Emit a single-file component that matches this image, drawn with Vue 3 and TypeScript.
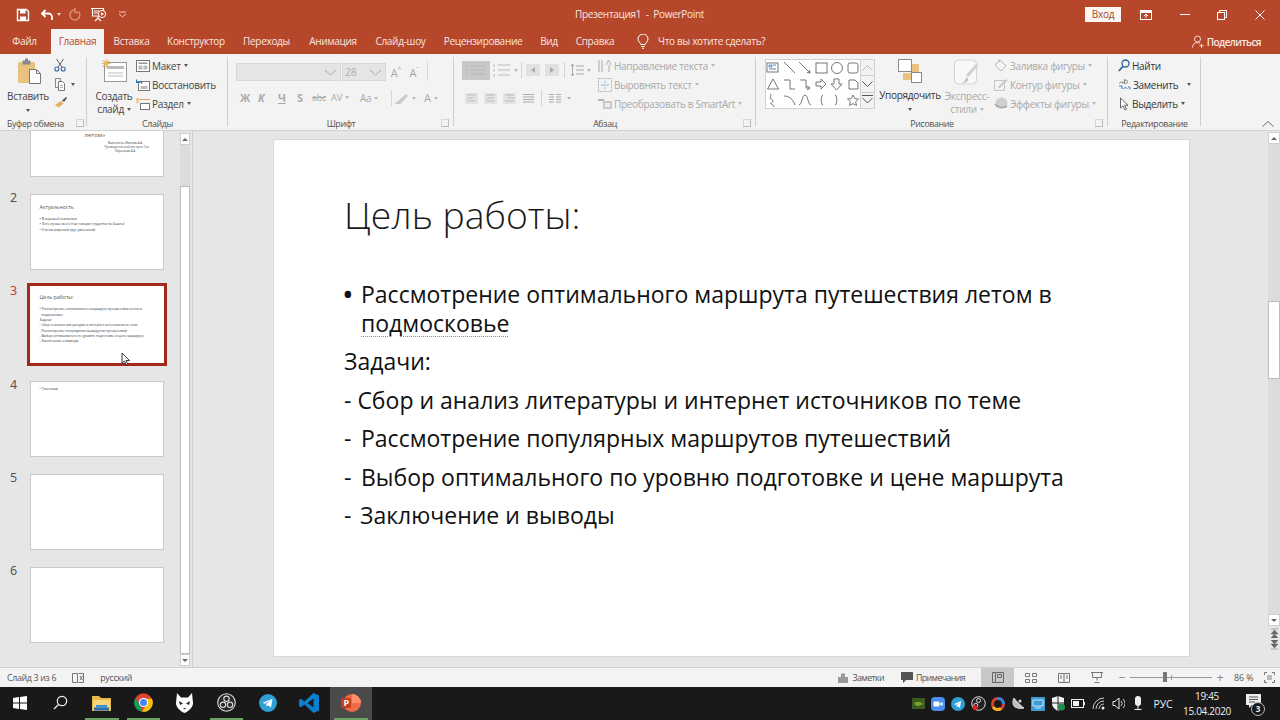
<script setup lang="ts">
const tabs = [
  { t: 'Файл', w: 49 },
  { t: 'Главная', w: 53, active: true },
  { t: 'Вставка', w: 55 },
  { t: 'Конструктор', w: 74 },
  { t: 'Переходы', w: 67 },
  { t: 'Анимация', w: 66 },
  { t: 'Слайд-шоу', w: 69 },
  { t: 'Рецензирование', w: 96 },
  { t: 'Вид', w: 36 },
  { t: 'Справка', w: 56 },
]
const fmt = ['Ж', 'К', 'Ч', 'S']
const thumbsEmpty = [5, 6]
</script>

<template>
  <div class="app">
    <header class="titlebar">
      <div class="qat">
        <svg class="qi" width="14" height="14" viewBox="0 0 14 14"><path d="M1.500 1.500h9l2 2v9h-11z" fill="none" stroke="#fff" stroke-width="1.400"/><rect x="4" y="1.500" width="5.500" height="4" fill="#fff"/><rect x="4" y="8.500" width="6" height="4" fill="#fff"/></svg>
        <svg class="qi u" width="14" height="14" viewBox="0 0 14 14"><path d="M5.500 2 2 5.500 5.500 9M2 5.500h6.500a3.500 3.500 0 0 1 3.500 3.500v3" fill="none" stroke="#fff" stroke-width="1.800"/></svg>
        <i class="mini-caret light"></i>
        <svg class="qi r" width="14" height="14" viewBox="0 0 14 14"><path d="M10.500 3.500a5 5 0 1 1-4-1.500M7 0v4.500h3" fill="none" stroke="#d98e78" stroke-width="1.500"/></svg>
        <svg class="qi s" width="18" height="16" viewBox="0 0 18 16"><path d="M1 1.500h13M2.500 1.500v7.500h11V1.500M8 9v2M5 14l3-3 3 3" fill="none" stroke="#fff" stroke-width="1.200"/><circle cx="12" cy="7" r="3.600" fill="#b7472a" stroke="#fff"/><path d="M11 5.200 14 7l-3 1.800z" fill="#fff"/><path d="M4 4h5M4 6h4" stroke="#fff"/></svg>
        <svg class="qi c" width="9" height="7" viewBox="0 0 9 7"><path d="M1 1h7M1 3l3.500 3L8 3" fill="none" stroke="#edc9bd"/></svg>
      </div>
      <div class="doc-title">Презентация1&nbsp; -&nbsp; PowerPoint</div>
      <div class="win">
        <button class="signin">Вход</button>
        <svg class="w1" width="12" height="10" viewBox="0 0 12 10"><rect x=".5" y=".5" width="11" height="9" fill="none" stroke="#fff"/><rect x=".5" y=".5" width="11" height="2.500" fill="#fff"/><path d="M6 8V4M4 6l2-2 2 2" fill="none" stroke="#fff"/></svg>
        <span class="w2"></span>
        <svg class="w3" width="10" height="10" viewBox="0 0 10 10"><path d="M2.500 2.500V.5h7v7h-2" fill="none" stroke="#fff"/><rect x=".5" y="2.500" width="7" height="7" fill="none" stroke="#fff"/></svg>
        <svg class="w4" width="10" height="10" viewBox="0 0 10 10"><path d="M.5.5l9 9M9.500.5l-9 9" stroke="#fff" fill="none"/></svg>
      </div>
    </header>

    <nav class="tabs">
      <div v-for="tab in tabs" :key="tab.t" class="tab" :class="{ active: tab.active }" :style="{ width: tab.w + 'px' }">{{ tab.t }}</div>
      <svg class="bulb" width="12" height="15" viewBox="0 0 12 15"><path d="M3.800 10.500C3.500 8.500 1 7.800 1 5a5 5 0 0 1 10 0c0 2.800-2.500 3.500-2.800 5.500zM4.200 12.500h3.600M5 14.300h2" fill="none" stroke="#fff"/></svg>
      <div class="tell">Что вы хотите сделать?</div>
      <div class="share">
        <svg width="12" height="13" viewBox="0 0 12 13"><circle cx="5.500" cy="4" r="3" fill="none" stroke="#edd"/><path d="M.5 12.500c0-3 2-4.800 5-4.800 1 0 2 .2 2.600.6M7.500 10.800h4M9.500 8.800v4" fill="none" stroke="#edd"/></svg>
        <span>Поделиться</span>
      </div>
    </nav>

    <section class="ribbon">
      <!-- Буфер обмена -->
      <div class="group g-clip">
        <div class="g-body">
          <div class="big paste">
            <svg width="26" height="28" viewBox="0 0 26 28"><rect x="1" y="4" width="17" height="21" rx="1" fill="#e8c27e"/><rect x="5.500" y="2.500" width="8" height="4" fill="#8a8a8a"/><rect x="8" y=".5" width="3" height="3" fill="#8a8a8a"/><path d="M12.500 11.500h7l4 4v10h-11z" fill="#fff" stroke="#777"/><path d="M19.500 11.500v4h4" fill="none" stroke="#777"/></svg>
            <span class="big-t">Вставить</span>
            <i class="mini-caret"></i>
          </div>
          <div class="clip-col">
            <svg width="12" height="14" viewBox="0 0 12 14"><circle cx="2.800" cy="11" r="2" fill="none" stroke="#3e6a9e" stroke-width="1.100"/><circle cx="9.200" cy="11" r="2" fill="none" stroke="#3e6a9e" stroke-width="1.100"/><path d="M2.500 1l5.600 8.500M9.500 1 3.900 9.500" stroke="#666" fill="none"/></svg>
            <div class="clip-row">
              <svg width="12" height="14" viewBox="0 0 12 14"><path d="M1.500 1.500h5v9h-5z" fill="#f3f3f3" stroke="#888"/><path d="M4.500 4.500h4l2 2v7h-6z" fill="#fff" stroke="#777"/><path d="M6 8.500h3M6 10.500h3" stroke="#aaa"/></svg>
              <i class="mini-caret"></i>
            </div>
            <svg width="14" height="12" viewBox="0 0 14 12"><path d="M1 9 7 5l2.500 2.500L4.500 11.500z" fill="#e0b060"/><path d="M8 4.500 12 1l1 1-3 4z" fill="#555"/></svg>
          </div>
        </div>
        <div class="g-label">Буфер обмена<i class="launcher"></i></div>
      </div>

      <!-- Слайды -->
      <div class="group g-slides">
        <div class="g-body">
          <div class="big create">
            <svg width="26" height="24" viewBox="0 0 26 24"><rect x="3.500" y="3.500" width="22" height="19" fill="#fff" stroke="#999"/><rect x="6" y="7" width="17" height="3" fill="#bbb"/><path d="M7 14h15M7 17h15" stroke="#bbb"/><path d="M5 0v9M.5 4.500h9M1.800 1.300l6.400 6.400M8.200 1.300 1.800 7.700" stroke="#e8b860" stroke-width="1.200"/></svg>
            <span class="big-t c1">Создать</span>
            <span class="big-t">слайд<i class="mini-caret inline"></i></span>
          </div>
          <div class="rows s-col">
            <div class="row">
              <svg width="14" height="12" viewBox="0 0 14 12"><rect x=".5" y=".5" width="13" height="11" fill="#fff" stroke="#777"/><rect x="2.500" y="2.500" width="9" height="1.500" fill="#999"/><rect x="2.500" y="5.500" width="4" height="4" fill="#bbb"/><rect x="7.500" y="5.500" width="4" height="4" fill="#bbb"/></svg>
              <span>Макет</span><i class="mini-caret inline"></i>
            </div>
            <div class="row">
              <svg width="14" height="12" viewBox="0 0 14 12"><rect x="2.500" y="2.500" width="11" height="9" fill="#fff" stroke="#777"/><rect x="4.500" y="7" width="7" height="3" fill="#bbb"/><path d="M6 4.500A3 3 0 0 0 1.500 3M.5.500v3h3" fill="none" stroke="#2a6ab0" stroke-width="1.200"/></svg>
              <span>Восстановить</span>
            </div>
            <div class="row">
              <svg width="14" height="12" viewBox="0 0 14 12"><rect x="4.500" y="5.500" width="9" height="6" fill="#fff" stroke="#777"/><path d="M4 1.500h10M0 1.500h3M0 4h3" stroke="#e0a060"/><rect x=".5" y=".5" width="3" height="2" fill="#e8b860"/></svg>
              <span>Раздел</span><i class="mini-caret inline"></i>
            </div>
          </div>
        </div>
        <div class="g-label">Слайды</div>
      </div>

      <!-- Шрифт -->
      <div class="group g-font">
        <div class="g-body col">
          <div class="font-row1">
            <div class="combo c-font"><svg width="13" height="7" viewBox="0 0 13 7"><path d="M1 1l5.500 5L12 1" fill="none" stroke="#aaa"/></svg></div>
            <div class="combo c-size"><span>28</span><svg width="13" height="7" viewBox="0 0 13 7"><path d="M1 1l5.500 5L12 1" fill="none" stroke="#aaa"/></svg></div>
            <span class="fa">A<sup>^</sup></span>
            <span class="fa">A<sup>ˇ</sup></span>
            <em class="f-sep"></em>
          </div>
          <div class="font-row2">
            <b v-for="f in fmt" :key="f" class="f" :class="'f-' + f">{{ f }}</b>
            <span class="f abc">abc</span>
            <span class="f av">AV<i class="mini-caret dis inline"></i></span>
            <span class="f aa">Aa<i class="mini-caret dis inline"></i></span>
            <em class="f-sep2"></em>
            <svg class="hl" width="16" height="14" viewBox="0 0 16 14"><path d="M2 12 12 3l2 2-8 8z" fill="#c9c9c9"/><path d="M1 12h6" stroke="#bbb"/></svg>
            <i class="mini-caret dis"></i>
            <span class="f a-last">A<i class="mini-caret dis inline"></i></span>
          </div>
        </div>
        <div class="g-label">Шрифт<i class="launcher"></i></div>
      </div>

      <!-- Абзац -->
      <div class="group g-para">
        <div class="g-body">
          <div class="para-left">
            <div class="p-row">
              <span class="bullets"><svg width="22" height="14" viewBox="0 0 22 14"><path d="M6 3h14M6 7h14M6 11h14M1 3h2M1 7h2M1 11h2" stroke="#b5b5b5"/></svg></span>
              <svg class="num" width="18" height="14" viewBox="0 0 18 14"><path d="M5 2h12M5 7h12M5 12h12M1 1v3M1 6v3M1 11v3" stroke="#bdbdbd"/></svg>
              <i class="mini-caret dis"></i>
              <em class="p-sep first-sep"></em>
              <svg width="14" height="12" viewBox="0 0 14 12"><rect width="14" height="12" fill="#e1e1e1"/><path d="M9 3 5 6l4 3z" fill="#aaa"/></svg>
              <svg class="ind2" width="14" height="12" viewBox="0 0 14 12"><rect width="14" height="12" fill="#e1e1e1"/><path d="M5 3l4 3-4 3z" fill="#aaa"/></svg>
              <em class="p-sep"></em>
              <svg width="14" height="14" viewBox="0 0 14 14"><path d="M2.500 1v12M1 3l1.500-2L4 3M1 11l1.500 2L4 11M6 3h8M6 7h8M6 11h8" stroke="#aaa" fill="none"/></svg>
              <i class="mini-caret dis"></i>
            </div>
            <div class="p-row r2">
              <svg width="13" height="11" viewBox="0 0 13 11"><rect width="13" height="11" fill="#e4e4e4"/><path d="M2 2h9M2 5h6M2 8h9" stroke="#bbb"/></svg>
              <svg width="13" height="11" viewBox="0 0 13 11"><rect width="13" height="11" fill="#e4e4e4"/><path d="M2 2h9M3 5h7M2 8h9" stroke="#bbb"/></svg>
              <svg width="13" height="11" viewBox="0 0 13 11"><rect width="13" height="11" fill="#e4e4e4"/><path d="M2 2h9M5 5h6M2 8h9" stroke="#bbb"/></svg>
              <svg width="13" height="11" viewBox="0 0 13 11"><path d="M1 1.500h11M1 4h11M1 6.500h11M1 9h11" stroke="#aaa"/></svg>
              <em class="p-sep"></em>
              <svg width="13" height="11" viewBox="0 0 13 11"><path d="M1 1.500h5M1 4h5M1 6.500h5M1 9h5M8 1.500h5M8 4h5M8 6.500h5M8 9h5" stroke="#aaa"/></svg>
              <i class="mini-caret dis"></i>
            </div>
          </div>
          <div class="rows dis-col p-col">
            <div class="row">
              <svg width="14" height="14" viewBox="0 0 14 14"><path d="M1 1v12M4 1v12M11 6v7" stroke="#aaa" fill="none"/><path d="M8 6l2.500-5L13 6" stroke="#9db6d2" fill="none"/></svg>
              <span>Направление текста</span><i class="mini-caret dis inline"></i>
            </div>
            <div class="row">
              <svg width="14" height="14" viewBox="0 0 14 14"><rect x=".5" y=".5" width="13" height="13" fill="none" stroke="#b5b5b5" stroke-dasharray="2 1"/><path d="M3 7h8M7 3v2M7 9v2" stroke="#9db6d2"/></svg>
              <span>Выровнять текст</span><i class="mini-caret dis inline"></i>
            </div>
            <div class="row">
              <svg width="14" height="12" viewBox="0 0 14 12"><rect x="5" y="3" width="9" height="8" fill="#c8c8c8"/><rect x="0" y="1" width="6" height="2" fill="#b5b5b5"/><rect x="7" y="5" width="5" height="4" fill="#eee"/></svg>
              <span>Преобразовать в SmartArt</span><i class="mini-caret dis inline"></i>
            </div>
          </div>
        </div>
        <div class="g-label">Абзац<i class="launcher"></i></div>
      </div>

      <!-- Рисование -->
      <div class="group g-draw">
        <div class="g-body">
          <div class="gallery">
            <svg width="97" height="48" viewBox="0 0 97 48" class="shapes">
              <g fill="none" stroke="#666" stroke-width=".9">
                <g transform="translate(-2 0)">
                  <rect x="3" y="3" width="11" height="9"/><path d="M5 5h3v2H5zM9 5h3M5 9h7" stroke="#4a7ab0"/>
                  <path d="M9 19l5.500 10H3.500z"/>
                  <path d="M6 34c3 1-2 4 1 5s2 3 0 4 3 1 3 4"/>
                </g>
                <g transform="translate(-3 0)">
                  <path d="M21 2l11 11M21 20h6v9h5M21 36c5 0 9 3 11 9"/>
                </g>
                <g transform="translate(-5 0)">
                  <path d="M38 2l11 11M49 13l-3-.5M49 13l-.5-3M39 20h6v8h4M46 26l3 2-3 2M38 45c3 0 3-10 6-10s3 10 6 10"/>
                </g>
                <g transform="translate(-5 0)">
                  <rect x="55" y="3" width="11" height="10"/>
                  <path d="M55 22h5v-3l5 5-5 5v-3h-5zM62 35c-2 0-1 4-2 5 1 1 0 5 2 5"/>
                </g>
                <g transform="translate(-6 0)">
                  <circle cx="77" cy="8" r="5.500"/>
                  <path d="M74 19h5v5h3l-5.500 6L71 24h3zM75 35c2 0 1 4 2 5-1 1 0 5-2 5"/>
                </g>
                <g transform="translate(-5 0)">
                  <rect x="87" y="3" width="10" height="10" rx="2"/>
                  <path d="M88 20h6l3 3v6H88zM92 35l1.700 3.500 3.800.5-2.800 2.600.8 3.900-3.500-1.900-3.500 1.900.8-3.900-2.800-2.600 3.800-.5z"/>
                </g>
              </g>
            </svg>
            <div class="g-scroll">
              <span><svg width="11" height="6" viewBox="0 0 11 6"><path d="M.5 5.500 5.500.5l5 5" fill="none" stroke="#bbb"/></svg></span>
              <span><svg width="11" height="6" viewBox="0 0 11 6"><path d="M.5.5l5 5 5-5" fill="none" stroke="#555"/></svg></span>
              <span class="more"><svg width="11" height="10" viewBox="0 0 11 10"><path d="M0 .5h11M.5 3l5 5 5-5" fill="none" stroke="#555"/></svg></span>
            </div>
          </div>
          <div class="big arrange">
            <svg width="24" height="26" viewBox="0 0 24 26"><rect x=".5" y=".5" width="13" height="12" fill="#fff" stroke="#8a8a8a"/><rect x="14" y="5" width="7" height="8" fill="#e8c27e"/><rect x="5" y="14" width="8" height="7" fill="#e8c27e"/><rect x="13.500" y="13.500" width="10" height="10" fill="#fff" stroke="#8a8a8a"/></svg>
            <span class="big-t">Упорядочить</span>
            <i class="mini-caret"></i>
          </div>
          <div class="big express">
            <svg width="26" height="26" viewBox="0 0 26 26"><rect x=".5" y="1" width="22" height="24" rx="4" fill="#f8f8f8" stroke="#d4d4d4"/><path d="M24 7l-10 11-2-2L22 5z" fill="#cfcfcf"/><path d="M6 24c3 0 6-2 6-6l2 2c0 3-3 4-8 4z" fill="#bbb"/></svg>
            <span class="big-t d1">Экспресс-</span>
            <span class="big-t d2">стили<i class="mini-caret dis inline"></i></span>
          </div>
          <div class="rows dis-col d-col">
            <div class="row"><svg width="14" height="13" viewBox="0 0 14 13"><path d="M6 1l6 6-5 5-6-6z" fill="#f5f5f5" stroke="#b5b5b5"/><path d="M4 0l2 3" stroke="#b5b5b5"/></svg><span>Заливка фигуры</span><i class="mini-caret dis inline"></i></div>
            <div class="row"><svg width="14" height="13" viewBox="0 0 14 13"><rect x=".5" y="2.500" width="10" height="10" fill="none" stroke="#c5c5c5"/><path d="M4 9l8-8 1.500 1.500-8 8z" fill="#c8c8c8"/></svg><span>Контур фигуры</span><i class="mini-caret dis inline"></i></div>
            <div class="row"><svg width="14" height="13" viewBox="0 0 14 13"><ellipse cx="7.500" cy="6" rx="6" ry="5.500" fill="#cfcfcf"/><path d="M1 7c2 3 7 5 12 2" fill="none" stroke="#a8a8a8" stroke-width="1.500"/></svg><span>Эффекты фигуры</span><i class="mini-caret dis inline"></i></div>
          </div>
        </div>
        <div class="g-label">Рисование<i class="launcher"></i></div>
      </div>

      <!-- Редактирование -->
      <div class="group g-edit">
        <div class="g-body">
          <div class="rows e-col">
            <div class="row"><svg width="12" height="13" viewBox="0 0 12 13"><circle cx="7.500" cy="4.500" r="3.500" fill="none" stroke="#2a5e9e" stroke-width="1.300"/><path d="M5 7.200.8 12" stroke="#2a5e9e" stroke-width="1.600"/></svg><span>Найти</span></div>
            <div class="row"><svg width="13" height="13" viewBox="0 0 13 13"><path d="M1.500 5.500c.5-2 3.500-2 3.500 0v-2M6.500 1v4.500c1.500 0 3 0 3-2s-3-1.500-3 0" fill="none" stroke="#666" stroke-width=".8"/><path d="M1 8h3v3M6 11c0-2 3-2 3 0M10 9c2-1 3 2 1 2.500" fill="none" stroke="#2a6ab0" stroke-width=".9"/></svg><span>Заменить</span><i class="mini-caret wide"></i></div>
            <div class="row"><svg width="12" height="14" viewBox="0 0 12 14"><path d="M2.500 1v10l2.500-2 2 4 1.500-.8-2-4h3.500z" fill="#fff" stroke="#666"/></svg><span>Выделить</span><i class="mini-caret inline"></i></div>
          </div>
        </div>
        <div class="g-label">Редактирование</div>
      </div>

      <div class="rib-rest">
        <svg width="12" height="6" viewBox="0 0 12 6"><path d="M.5 5.500 6 .5l5.500 5" fill="none" stroke="#666"/></svg>
      </div>
    </section>

    <main class="workspace">
      <aside class="slides-panel">
        <div class="thumbs">
          <div class="thumb-row first">
            <span class="tn"></span>
            <div class="thumb t1">
              <div class="t1-title">летом»</div>
              <div class="t1-sub">Выполнила: Иванова А.А.<br />Руководитель работы: преп. Сал<br />Образцова А.А.</div>
            </div>
          </div>
          <div class="thumb-row">
            <span class="tn">2</span>
            <div class="thumb">
              <div class="th-title">Актуальность</div>
              <div class="th-body">• В хорошей компании<br />• Лето лучше всего (так говорят студенты на башне)<br />• У меня широкий круг увлечений</div>
            </div>
          </div>
          <div class="thumb-row sel">
            <span class="tn">3</span>
            <div class="thumb">
              <div class="th-title">Цель работы:</div>
              <div class="th-body">• Рассмотрение оптимального маршрута путешествия летом в<br />&nbsp;&nbsp;подмосковье<br />Задачи:<br />- Сбор и анализ литературы и интернет источников по теме<br />- Рассмотрение популярных маршрутов путешествий<br />- Выбор оптимального по уровню подготовке и цене маршрута<br />- Заключение и выводы</div>
              <svg class="cursor" width="9" height="14" viewBox="0 0 9 14"><path d="M1 1v10l2.500-2 1.700 4 1.600-.7-1.700-3.800H8.500z" fill="#fff" stroke="#222" stroke-width=".9"/></svg>
            </div>
          </div>
          <div class="thumb-row">
            <span class="tn">4</span>
            <div class="thumb"><div class="th-body t4">• Текстовая</div></div>
          </div>
          <div v-for="n in thumbsEmpty" :key="n" class="thumb-row">
            <span class="tn">{{ n }}</span>
            <div class="thumb"></div>
          </div>
        </div>
        <div class="lscroll">
          <span class="arrow"><i class="tri up"></i></span>
          <span class="track"></span>
          <span class="lthumb"></span>
          <span class="arrow"><i class="tri down"></i></span>
        </div>
      </aside>

      <div class="stage">
        <article class="slide">
          <h1>Цель работы:</h1>
          <div class="li first-li"><span class="m">•</span><span class="x">Рассмотрение оптимального маршрута путешествия летом в<br /><span class="sq">подмосковье</span></span></div>
          <div class="p">Задачи:</div>
          <div class="p">- Сбор и анализ литературы и интернет источников по теме</div>
          <div class="li"><span class="m">-</span><span class="x">Рассмотрение популярных маршрутов путешествий</span></div>
          <div class="li"><span class="m">-</span><span class="x">Выбор оптимального по уровню подготовке и цене маршрута</span></div>
          <div class="li last-li"><span class="m">-</span><span class="x">Заключение и выводы</span></div>
        </article>
      </div>

      <div class="rscroll">
        <span class="arrow"><i class="tri up"></i></span>
        <span class="rtrack grow1"></span>
        <span class="rthumb"></span>
        <span class="rtrack grow2"></span>
        <span class="arrow"><i class="tri down"></i></span>
        <span class="nav"><svg width="9" height="10" viewBox="0 0 9 10"><path d="M1 1h7M4.500 2 8 6H1zM4.500 6 8 10H1z" fill="#666" stroke="#666" stroke-width=".5"/></svg></span>
        <span class="nav"><svg width="9" height="10" viewBox="0 0 9 10"><path d="M1 9h7M4.500 8 8 4H1zM4.500 4 8 0H1z" fill="#666" stroke="#666" stroke-width=".5"/></svg></span>
      </div>
    </main>

    <footer class="status">
      <span class="st-slide">Слайд 3 из 6</span>
      <svg class="st-ic" width="12" height="10" viewBox="0 0 12 10"><path d="M.5.500h5v9h-5zM6.500.500h5v9h-5M8 3l2.500 4M10.500 3 8 7" fill="none" stroke="#777"/></svg>
      <span class="st-lang">русский</span>
      <span class="st-spacer"></span>
      <svg class="notes" width="10" height="11" viewBox="0 0 10 11"><path d="M0 5h10v6H0zM3 1.500h4V5H3z" fill="#999"/></svg>
      <span class="st-notes">Заметки</span>
      <svg class="comm" width="12" height="11" viewBox="0 0 12 11"><path d="M0 0h12v8H5l-3 3V8H0z" fill="#555"/></svg>
      <span class="st-comm">Примечания</span>
      <span class="view active"><svg width="12" height="11" viewBox="0 0 12 11"><path d="M.5.500h11v10H.5zM3.500.500v10M5.500 2.500h4v3h-4z" fill="none" stroke="#666"/></svg></span>
      <span class="view"><svg width="12" height="10" viewBox="0 0 12 10"><path d="M.5.500h4v3h-4zM7.500.500h4v3h-4zM.5 6.500h4v3h-4zM7.500 6.500h4v3h-4z" fill="none" stroke="#777"/></svg></span>
      <span class="view"><svg width="12" height="10" viewBox="0 0 12 10"><path d="M.5.500h11v9H.5zM6 .5v9M2 3h2M2 5h2M8 3h2M8 5h2" fill="none" stroke="#777"/></svg></span>
      <span class="view"><svg width="12" height="11" viewBox="0 0 12 11"><path d="M0 .500h12M1.500.500v5h9v-5M6 5.500v3M3.500 10.500h5" fill="none" stroke="#777"/></svg></span>
      <div class="zoombar">
        <span class="zm">−</span>
        <div class="slider"><i class="tick"></i><i class="knob"></i></div>
        <span class="zm">+</span>
      </div>
      <span class="pct">86 %</span>
      <svg class="fit" width="11" height="11" viewBox="0 0 11 11"><path d="M.5 3V.5H3M8 .5h2.500V3M.5 8v2.500H3M8 10.500h2.500V8" fill="none" stroke="#777"/><rect x="3" y="3" width="5" height="5" fill="#bbb"/></svg>
    </footer>

    <div class="taskbar">
      <div class="tb start"><svg width="14" height="14" viewBox="0 0 14 14"><path d="M0 2l6-.9v5.400H0zM7 1l7-1v6.500H7zM0 7.500h6v5.400L0 12zM7 7.500h7V14l-7-1z" fill="#fff"/></svg></div>
      <div class="tb"><svg width="15" height="15" viewBox="0 0 15 15"><circle cx="9" cy="6" r="4.700" fill="none" stroke="#eee" stroke-width="1.200"/><path d="M5.500 9.500 1 14" stroke="#eee" stroke-width="1.300"/></svg></div>
      <div class="tb g"><svg width="19" height="16" viewBox="0 0 19 16"><path d="M0 1h7l2 2h10v13H0z" fill="#e8b84a"/><rect x="1" y="5" width="17" height="10" fill="#f5d67a"/><rect x="4" y="10" width="11" height="2.500" fill="#3a8fd8"/><rect x="2" y="12.500" width="15" height="3" fill="#2a6fb5"/></svg></div>
      <div class="tb g"><svg width="19" height="19" viewBox="0 0 19 19"><circle cx="9.500" cy="9.500" r="9.200" fill="#db4437"/><path d="M9.500 5.800h8.400A9.200 9.200 0 0 1 8 18.700l4.500-7z" fill="#f4c20d"/><path d="M1.500 4.800 6 12.300l2 6.400A9.200 9.200 0 0 1 1.500 4.800z" fill="#0f9d58"/><circle cx="9.500" cy="9.500" r="4.600" fill="#fff"/><circle cx="9.500" cy="9.500" r="3.500" fill="#4285f4"/></svg></div>
      <div class="tb"><svg width="17" height="20" viewBox="0 0 17 20"><path d="M1 0l4 4.500h7L16 0l1 10c0 4-4 8-8.500 10C4 18 0 14 0 10z" fill="#fff"/><path d="M3 8l4 2.500-3 1.500zM14 8l-4 2.500 3 1.500zM7 15l1.500 1.500L10 15z" fill="#222"/></svg></div>
      <div class="tb g"><svg width="19" height="19" viewBox="0 0 19 19"><circle cx="9.500" cy="9.500" r="8.800" fill="#2a2a2a" stroke="#ddd" stroke-width="1.100"/><circle cx="9.500" cy="5.800" r="2.700" fill="none" stroke="#ddd" stroke-width="1.100"/><circle cx="6" cy="11.800" r="2.700" fill="none" stroke="#ddd" stroke-width="1.100"/><circle cx="13" cy="11.800" r="2.700" fill="none" stroke="#ddd" stroke-width="1.100"/></svg></div>
      <div class="tb"><svg width="18" height="18" viewBox="0 0 18 18"><circle cx="9" cy="9" r="9" fill="#2f9fd6"/><path d="M3.500 8.800 13.500 4.700 12 13.500 9 11.300 7.600 12.600 7.300 10 12 6l-6 3.700z" fill="#fff"/></svg></div>
      <div class="tb"><svg width="20" height="20" viewBox="0 0 20 20"><path d="M14.500 0 20 2.500v15L14.500 20 5.500 11.500 2 14.200 0 13V7l2-1.200 3.500 2.700z" fill="#0b7fcf"/><path d="M14.500 5.500 8.500 10l6 4.500z" fill="#191919"/></svg></div>
      <div class="tb g on"><svg width="20" height="18" viewBox="0 0 20 18"><circle cx="11" cy="9" r="9" fill="#ed6c47"/><path d="M11 0a9 9 0 0 1 9 9h-9z" fill="#ff8f6b"/><rect x="0" y="4" width="10" height="10" rx="1" fill="#c43e1c"/><text x="2.400" y="12" class="pp">P</text></svg></div>
      <span class="tb-spacer"></span>
      <div class="tray">
        <svg width="13" height="11" viewBox="0 0 13 11"><rect width="13" height="11" fill="#3d5a22"/><path d="M2 6c2-3 6-3 9 0-3 2-6 3-9 0z" fill="#76a52c"/></svg>
        <svg width="14" height="14" viewBox="0 0 14 14"><rect width="14" height="14" rx="4" fill="#4a8cf0"/><rect x="2.500" y="4.500" width="6" height="5" rx="1" fill="#fff"/><path d="M9 6.500l2.500-1.500v4L9 7.500z" fill="#fff"/></svg>
        <svg width="14" height="14" viewBox="0 0 14 14"><circle cx="7" cy="7" r="7" fill="#2f9fd6"/><path d="M3 7l7-3-1 7-2.300-1.700-1 1-.2-2 3.200-2.500-4.200 2.300z" fill="#fff"/></svg>
        <svg width="15" height="15" viewBox="0 0 15 15"><circle cx="7.500" cy="7.500" r="6.800" fill="#222" stroke="#ddd"/><circle cx="7.500" cy="4.500" r="2" fill="none" stroke="#ddd"/><circle cx="4.800" cy="9.300" r="2" fill="none" stroke="#ddd"/><circle cx="4" cy="11.500" r="2.500" fill="#e02020"/></svg>
        <svg width="14" height="14" viewBox="0 0 14 14"><circle cx="7" cy="7" r="5.500" fill="none" stroke="#d8432f" stroke-width="3"/><path d="M7 1.500a5.500 5.500 0 0 1 5.500 5.500" fill="none" stroke="#2b84e0" stroke-width="3"/><path d="M2 10a5.500 5.500 0 0 0 8 1.500" fill="none" stroke="#f0b020" stroke-width="3"/></svg>
        <svg width="15" height="15" viewBox="0 0 15 15"><path d="M3 2c2 5 5 8 10 10M3 2c-2 4-1 8 1 9s6 2 9 1" fill="#bbb" stroke="#ddd"/><circle cx="9" cy="5" r="1.500" fill="#ddd"/></svg>
        <svg width="14" height="14" viewBox="0 0 14 14"><rect width="14" height="14" fill="#3a9bd6"/><path d="M2 3h10v6H2zM4 11h6" fill="none" stroke="#cdeaf8"/></svg>
        <svg width="14" height="15" viewBox="0 0 14 15"><path d="M1 2l6-2 6 2v5c0 4-3 6.500-6 8-3-1.500-6-4-6-8z" fill="#f2f2f2"/><path d="M7 0v15M1 7h12" stroke="#222"/><circle cx="10.500" cy="11" r="3.500" fill="#1e8c4e"/></svg>
        <svg width="14" height="9" viewBox="0 0 14 9"><rect x=".5" y=".5" width="12" height="8" fill="none" stroke="#eee"/><rect x="2" y="2" width="6" height="5" fill="#eee"/><rect x="13" y="3" width="1" height="3" fill="#eee"/></svg>
        <svg width="13" height="13" viewBox="0 0 13 13"><path d="M1 12A11 11 0 0 1 12 1M4 12a8 8 0 0 1 8-8M7 12a5 5 0 0 1 5-5" fill="none" stroke="#ccc"/><circle cx="11" cy="11" r="1.500" fill="#eee"/></svg>
        <svg width="13" height="13" viewBox="0 0 13 13"><path d="M1 4.500h2L7 1v11L3 8.500H1z" fill="none" stroke="#eee"/><path d="M9 4a3.500 3.500 0 0 1 0 5M11 2a6 6 0 0 1 0 9" fill="none" stroke="#ccc"/></svg>
        <svg width="10" height="15" viewBox="0 0 10 15"><rect x="2" y="0" width="6" height="10" rx="3" fill="#eee"/><path d="M5 10v3M1.500 13.500h7" stroke="#eee"/></svg>
      </div>
      <span class="lang">РУС</span>
      <div class="clock"><div>19:45</div><div>15.04.2020</div></div>
      <div class="notif">
        <svg width="15" height="14" viewBox="0 0 15 14"><path d="M0 0h15v11H6l-3 3v-3H0z" fill="#eee"/><path d="M3 3h9M3 5.500h9M3 8h6" stroke="#555"/></svg>
        <span class="badge">3</span>
      </div>
    </div>
  </div>
</template>

<style>
html, body { margin: 0; padding: 0; overflow: hidden; }
</style>

<style scoped>
.app { width: 1280px; height: 720px; display: flex; flex-direction: column; overflow: hidden; font-family: "Open Sans", "Noto Sans", sans-serif; font-size: 10px; letter-spacing: -.3px; color: #444; background: #e6e6e6; }

.titlebar { height: 29px; flex: none; background: #b7472a; display: flex; align-items: center; position: relative; color: #f7e6e0; }
.qat { display: flex; align-items: center; padding-left: 16px; }
.qi { flex: none; }
.qi.u { margin-left: 10px; }
.qi.r { margin-left: 7px; }
.qi.s { margin-left: 8px; }
.qi.c { margin-left: 10px; }
.doc-title { position: absolute; left: 0; right: 0; top: 7px; text-align: center; padding-right: 1px; }
.win { margin-left: auto; display: flex; align-items: center; }
.signin { width: 36px; height: 15px; margin: 0; padding: 0; border: 0; background: #fbf7f5; color: #a5452c; font: inherit; letter-spacing: inherit; line-height: 15px; }
.w1 { margin-left: 19px; }
.w2 { width: 10px; height: 1px; background: #fff; margin-left: 28px; }
.w3 { margin-left: 27px; }
.w4 { margin-left: 28px; margin-right: 15px; }

.tabs { height: 25px; flex: none; background: #b7472a; display: flex; align-items: stretch; color: #f7e6e0; }
.tab { text-align: center; line-height: 24px; flex: none; }
.tab:first-child { margin-right: 2px; }
.tab.active { background: #f3f3f3; color: #b7472a; }
.bulb { margin: 5px 0 0 14px; }
.tell { margin-left: 9px; line-height: 24px; }
.share { margin-left: auto; margin-right: 19px; display: flex; align-items: center; gap: 3px; color: #f7e6e0; font-weight: 600; letter-spacing: -.6px; }

.ribbon { height: 76px; flex: none; background: #f3f3f3; border-bottom: 1px solid #d2d2d2; display: flex; }
.group { flex: none; display: flex; flex-direction: column; position: relative; box-sizing: border-box; }
.group::after { content: ""; position: absolute; right: 0; top: 3px; bottom: 4px; width: 1px; background: #cfcfcf; }
.g-body { flex: 1; display: flex; min-height: 0; }
.g-body.col { flex-direction: column; }
.g-label { height: 14px; flex: none; text-align: center; line-height: 16px; color: #505050; font-size: 8.800px; letter-spacing: -.35px; position: relative; }
.launcher { position: absolute; right: 5px; top: 3px; width: 6px; height: 6px; border: 1px solid #bbb; border-top-color: #d5d5d5; border-left-color: #d5d5d5; }
.g-clip { width: 87px; }
.g-slides { width: 141px; }
.g-font { width: 226px; }
.g-para { width: 302px; }
.g-draw { width: 352px; }
.g-edit { width: 93px; }
.g-clip .g-label { text-align: left; padding-left: 7px; }
.g-clip .launcher { right: 3px; }

.big { display: flex; flex-direction: column; align-items: center; flex: none; }
.big-t { line-height: 13px; white-space: nowrap; }
.mini-caret { display: block; width: 0; height: 0; border-left: 2.500px solid transparent; border-right: 2.500px solid transparent; border-top: 3px solid #555; flex: none; }
.mini-caret.inline { display: inline-block; margin-left: 3px; vertical-align: 2px; }
.mini-caret.light { border-top-color: #f2d5cb; margin-left: 3px; }
.mini-caret.dis { border-top-color: #b8b8b8; }
.mini-caret.wide { margin-left: 9px; }

.paste { width: 56px; padding-top: 4px; }
.paste svg { margin-left: 4px; }
.paste .big-t { margin-top: 3px; line-height: 15px; }
.paste .mini-caret { margin-top: 5px; }
.clip-col { display: flex; flex-direction: column; align-items: flex-start; padding-top: 4px; gap: 5px; margin-left: -2px; }
.clip-row { display: flex; align-items: center; gap: 5px; }
.create { width: 54px; padding-top: 5px; }
.create .c1 { margin-top: 6px; line-height: 14px; }
.rows { display: flex; flex-direction: column; padding-top: 2px; }
.row { height: 19px; display: flex; align-items: center; white-space: nowrap; }
.row svg { margin-right: 2px; flex: none; }
.s-col { margin-left: -5px; }
.dis-col { color: #a9a9a9; }

.font-row1 { display: flex; align-items: center; padding: 9px 0 0 8px; height: 18px; position: relative; }
.combo { height: 18px; box-sizing: border-box; background: #e5e5e5; border: 1px solid #d8d8d8; display: flex; align-items: center; justify-content: flex-end; padding-right: 3px; }
.c-font { width: 105px; }
.c-size { width: 44px; justify-content: space-between; margin-left: 1px; padding-left: 2px; color: #b0b0b0; font-size: 10.500px; }
.fa { color: #a8a8a8; font-size: 11px; width: 18px; text-align: center; }
.fa:nth-child(3) { margin-left: 1px; }
.fa sup { font-size: 7px; line-height: 0; }
.f-sep { position: absolute; left: 199px; top: 7px; width: 1px; height: 20px; background: #d8d8d8; }
.f-sep2 { position: absolute; left: 163px; top: 9px; width: 1px; height: 16px; background: #d8d8d8; }
.font-row2 { display: flex; align-items: center; padding: 8px 0 0 0; height: 18px; color: #aaa; position: relative; }
.f { position: absolute; top: 10px; line-height: 14px; font-size: 11px; color: #ababab; white-space: nowrap; }
.f-Ж { left: 12px; }
.f-К { left: 30px; font-style: italic; }
.f-Ч { left: 50px; text-decoration: underline; }
.f-S { left: 69px; }
.abc { left: 84px; font-size: 9px; text-decoration: line-through; }
.av { left: 103px; font-size: 9.500px; }
.aa { left: 132px; font-size: 10px; }
.hl { position: absolute; left: 166px; top: 10px; }
.font-row2 > .mini-caret { position: absolute; left: 184px; top: 16px; }
.a-last { left: 196px; }

.para-left { width: 145px; padding: 6px 0 0 8px; flex: none; box-sizing: border-box; }
.p-row { display: flex; align-items: center; height: 20px; gap: 3px; }
.p-row > * { flex: none; }
.p-row.r2 { margin-top: 8px; padding-left: 2.500px; gap: 6px; }
.bullets { width: 28px; height: 19px; background: #c8c8c8; display: flex; align-items: center; justify-content: center; }
.p-sep { width: 1px; height: 16px; background: #d4d4d4; margin: 0 2px; }
.p-sep.first-sep { margin: 0 1px 0 0; }
.r2 .p-sep { margin: 0; }
.ind2 { margin-left: 2px; }
.p-col { margin-left: -1px; }
.p-col .row svg { margin-right: 2px; }

.gallery { width: 110px; height: 50px; margin: 5px 0 0 9px; flex: none; background: #fff; border: 1px solid #d0d0d0; box-sizing: border-box; display: flex; position: relative; }
.shapes { flex: none; }
.g-scroll { width: 13px; position: absolute; right: 0; top: 0; bottom: 0; display: flex; flex-direction: column; background: #f3f3f3; border-left: 1px solid #d0d0d0; }
.g-scroll span { flex: 1; display: flex; align-items: center; justify-content: center; border-bottom: 1px solid #d0d0d0; }
.g-scroll span.more { border-bottom: 0; }
.arrange { width: 70px; padding-top: 5px; }
.arrange .big-t { margin-top: 3px; line-height: 15px; color: #333; }
.arrange .mini-caret { margin-top: 5px; }
.express { width: 52px; padding-top: 5px; color: #a9a9a9; margin-left: -4px; }
.express .d1 { margin-top: 4px; line-height: 14px; }
.d-col { margin-left: 1px; }
.d-col .row svg { margin-right: 2px; }

.e-col { margin-left: 10px; }
.e-col .row span { color: #333; }
.rib-rest { flex: 1; position: relative; display: flex; justify-content: flex-end; align-items: flex-end; padding: 0 6px 3px 0; }

.workspace { flex: 1; min-height: 0; display: flex; background: #e6e6e6; }
.slides-panel { width: 192px; flex: none; display: flex; border-right: 1px solid #cfcfcf; position: relative; overflow: hidden; letter-spacing: 0; }
.thumbs { width: 180px; flex: none; display: flex; flex-direction: column; overflow: hidden; }
.thumb-row { display: flex; height: 76px; margin-bottom: 17.200px; flex: none; position: relative; }
.thumb-row.first { margin-top: -30px; }
.tn { width: 29.500px; flex: none; box-sizing: border-box; padding-left: 10px; font-size: 12.500px; color: #555; line-height: 7px; font-family: "Noto Sans", sans-serif; }
.thumb { width: 134px; height: 76px; box-sizing: border-box; background: #fff; border: 1px solid #c9c9c9; position: relative; font-size: 3.300px; color: #555; flex: none; }
.sel .tn { color: #c0432a; }
.sel .thumb { border: 3px solid #a12a1c; width: 140px; height: 83px; margin: -4px 0 0 -3px; padding: 0; background: #fff; }
.th-title { font-size: 5.200px; padding: 8px 0 0 9px; color: #555; line-height: 8px; }
.sel .th-title { padding-top: 7px; padding-left: 10px; }
.th-body { padding: 5px 0 0 9px; line-height: 5.300px; color: #333; white-space: nowrap; font-size: 3.350px; }
.sel .th-body { padding-left: 10px; }
.th-body.t4 { padding-top: 4px; }
.t1 { text-align: center; }
.t1-title { position: absolute; top: 29px; left: 54px; font-size: 6px; color: #555; line-height: 8px; white-space: nowrap; }
.t1-sub { position: absolute; top: 39px; left: 74px; width: 42px; font-size: 2.800px; line-height: 4px; color: #444; white-space: nowrap; }
.cursor { position: absolute; left: 91px; top: 66px; }

.lscroll { width: 10px; margin: 2px 2px 1px 0; flex: none; display: flex; flex-direction: column; background: #dcdcdc; }
.arrow { height: 12px; flex: none; background: #fff; border: 1px solid #cfcfcf; box-sizing: border-box; display: flex; align-items: center; justify-content: center; }
.tri { width: 0; height: 0; border-left: 3px solid transparent; border-right: 3px solid transparent; }
.tri.up { border-bottom: 3.500px solid #666; }
.tri.down { border-top: 3.500px solid #666; }
.track { height: 41px; flex: none; }
.lthumb { flex: 1; background: #fff; border: 1px solid #bdbdbd; }

.stage { flex: 1; min-width: 0; display: flex; justify-content: flex-start; padding: 9px 0 0 81px; }
.slide { width: 915px; height: 516px; box-sizing: border-box; background: #fff; box-shadow: 0 0 0 1px #d8d8d8; padding: 0 0 0 70px; font-family: "Open Sans", "Noto Sans", sans-serif; font-size: 23px; letter-spacing: 0; color: #111; line-height: 29px; }
.slide h1 { margin: 0 0 37px; padding-top: 47px; font-size: 37.300px; line-height: 56px; font-weight: 300; color: #1a1a1a; height: 56px; }
.p, .li { margin-bottom: 9.400px; white-space: nowrap; }
.li { display: flex; }
.m { width: 17px; flex: none; }
.first-li .m { font-size: 31px; width: 19px; margin-left: -2px; }
.last-li .m { width: 16px; }
.sq { text-decoration: underline dotted #e06a60 1px; text-underline-offset: 4px; }

.rscroll { width: 12px; flex: none; display: flex; flex-direction: column; background: #e6e6e6; padding-top: 1px; }
.rtrack { background: #dcdcdc; }
.rtrack.grow1 { height: 157px; flex: none; }
.rtrack.grow2 { flex: 1; }
.rthumb { height: 78px; flex: none; background: #fff; border: 1px solid #bdbdbd; box-sizing: border-box; }
.nav { height: 10px; flex: none; display: flex; align-items: center; justify-content: center; }
.rscroll .nav { margin-top: 2px; }
.rscroll .nav:last-child { margin-bottom: 17px; }

.status { height: 19px; flex: none; background: #f3f3f3; border-top: 1px solid #d0d0d0; display: flex; align-items: center; color: #555; font-size: 8.800px; }
.st-slide { margin-left: 7px; }
.st-ic { margin-left: 16px; }
.st-lang { margin-left: 16px; }
.st-spacer { flex: 1; }
.notes { margin-right: 4px; }
.st-notes { margin-right: 17px; letter-spacing: -.6px; }
.comm { margin-right: 3px; }
.st-comm { margin-right: 16px; letter-spacing: -.6px; }
.view { width: 33px; height: 19px; display: flex; align-items: center; justify-content: center; flex: none; }
.view.active { background: #c8c8c8; }
.zoombar { display: flex; align-items: center; margin-left: 3px; flex: none; }
.zm { width: 12px; text-align: center; color: #888; font-size: 12px; line-height: 14px; }
.slider { width: 82px; height: 1px; background: #999; margin: 0 2px; position: relative; }
.tick { position: absolute; left: 41px; top: -2px; width: 1px; height: 5px; background: #999; }
.knob { position: absolute; left: 33px; top: -5px; width: 4px; height: 10px; background: #777; }
.pct { margin-left: 8px; width: 20px; white-space: nowrap; letter-spacing: 0; }
.fit { margin: 0 5px 0 10px; flex: none; }

.taskbar { height: 33px; flex: none; background: #191919; display: flex; color: #eee; letter-spacing: 0; }
.tb { width: 41.500px; flex: none; display: flex; align-items: center; justify-content: center; box-sizing: border-box; border-bottom: 2px solid transparent; }
.tb.start { width: 39.500px; }
.tb.g { position: relative; }
.tb.g::after { content: ""; position: absolute; left: 4px; right: 4px; bottom: -2px; height: 2px; background: #6aa364; }
.tb.on { background: #4a4a4a; }
.tb-spacer { flex: 1; }
.tray { display: grid; grid-template-columns: repeat(12, 20px); justify-items: center; align-items: center; flex: none; }
.lang { align-self: center; margin-left: 5px; width: 20px; white-space: nowrap; text-align: center; font-size: 10.500px; letter-spacing: -.2px; color: #eee; }
.clock { margin-left: 10px; width: 48px; text-align: center; font-size: 10px; letter-spacing: -.3px; line-height: 15px; align-self: center; white-space: nowrap; }
.notif { position: relative; margin: 7px 18px 0 15px; width: 16px; height: 18px; flex: none; }
.badge { position: absolute; left: 5px; top: 8px; width: 12px; height: 12px; border-radius: 50%; background: #191919; border: 1px solid #bbb; color: #eee; font-size: 8px; line-height: 12px; text-align: center; font-weight: 700; }
.pp { font-size: 9px; font-weight: 700; fill: #fff; font-family: "Open Sans", sans-serif; }
</style>
